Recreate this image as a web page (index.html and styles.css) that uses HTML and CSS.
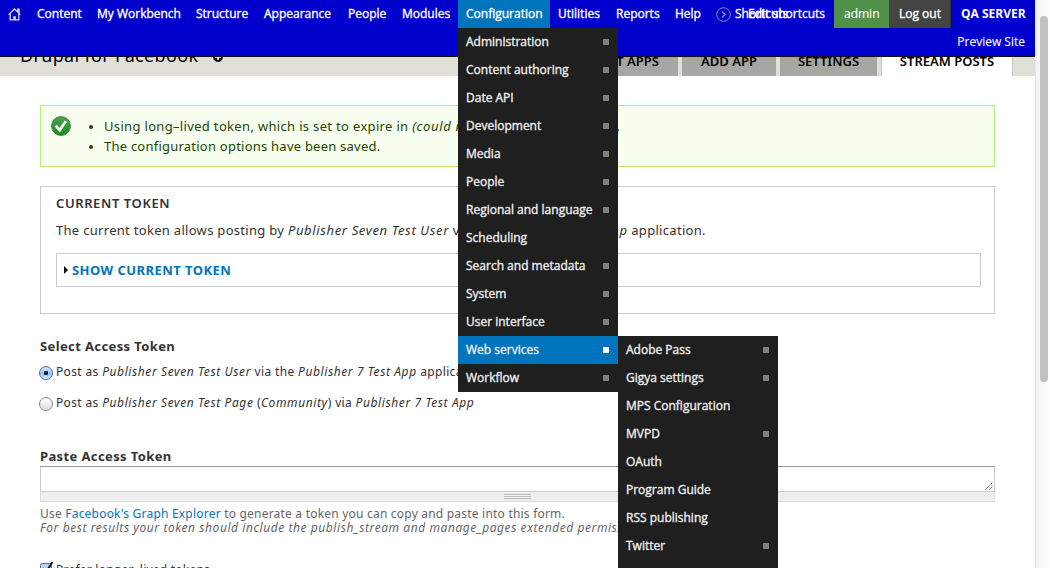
FILE: index.html
```
<!DOCTYPE html>
<html lang="en">
<head>
<meta charset="utf-8">
<title>Drupal for Facebook</title>
<link rel="stylesheet" href="styles.css">
</head>
<body>
<div class="viewport">
<div class="page">
  <nav class="toolbar">
    <ul class="menu">
      <li><svg class="home" width="13" height="13" viewBox="0 0 13 13" fill="none" stroke="#d5d8f2" stroke-width="1.3"><path d="M.6 6.6 6.5 1l5.9 5.6M2.2 5.8v6.1h8.6V5.8M9.8 3.6V1.2h1.2v3.6"/><path d="M5.2 11.8V8.2h2.6v3.6z" fill="#d5d8f2" stroke="none"/></svg></li>
      <li>Content</li>
      <li>My Workbench</li>
      <li>Structure</li>
      <li>Appearance</li>
      <li>People</li>
      <li>Modules</li>
      <li class="open">Configuration</li>
      <li>Utilities</li>
      <li>Reports</li>
      <li>Help</li>
      <li class="short"><svg width="15" height="15" viewBox="0 0 15 15" fill="none" stroke="#8585b5"><circle cx="7.5" cy="7.5" r="6.8"/><path d="M6 4.5l3.2 3L6 10.5" stroke-width="1.4"/></svg><span>Shortcuts</span><span class="edit">Edit shortcuts</span></li>
      <li class="admin">admin</li>
      <li class="logout">Log out</li>
      <li class="server">QA SERVER</li>
    </ul>
    <div class="preview">Preview Site</div>
    <ul class="dropdown main-drop">
      <li class="sub">Administration</li>
      <li class="sub">Content authoring</li>
      <li class="sub">Date API</li>
      <li class="sub">Development</li>
      <li class="sub">Media</li>
      <li class="sub">People</li>
      <li class="sub">Regional and language</li>
      <li>Scheduling</li>
      <li class="sub">Search and metadata</li>
      <li class="sub">System</li>
      <li class="sub">User interface</li>
      <li class="sub active">Web services
        <ul class="dropdown side-drop">
          <li class="sub">Adobe Pass</li>
          <li class="sub">Gigya settings</li>
          <li>MPS Configuration</li>
          <li class="sub">MVPD</li>
          <li>OAuth</li>
          <li>Program Guide</li>
          <li>RSS publishing</li>
          <li class="sub">Twitter</li>
          <li></li>
        </ul>
      </li>
      <li class="sub">Workflow</li>
    </ul>
  </nav>
  <header class="branding">
    <h1>Drupal for Facebook</h1>
    <svg class="plus" width="12" height="12" viewBox="0 0 12 12"><circle cx="6" cy="6" r="5.5" fill="#000" stroke="#fff"/><path d="M6 3v6M3 6h6" stroke="#fff" stroke-width="1.6"/></svg>
    <ul class="tabs">
      <li class="tab-list">LIST APPS</li>
      <li class="tab-add">ADD APP</li>
      <li class="tab-set">SETTINGS</li>
      <li class="tab-stream">STREAM POSTS</li>
    </ul>
  </header>
  <main class="content">
    <section class="status">
      <svg width="20" height="20" viewBox="0 0 20 20"><defs><linearGradient id="g" x1="0" y1="0" x2="0" y2="1"><stop offset="0" stop-color="#4da350"/><stop offset="1" stop-color="#149016"/></linearGradient></defs><circle cx="10" cy="10" r="9.4" fill="url(#g)" stroke="#39803b" stroke-width="1"/><path d="M4.8 9.600l3.800 4.600 6.200-9" fill="none" stroke="#fff" stroke-width="2.8"/></svg>
      <ul>
        <li class="expiry">Using long–lived token, which is set to expire in <em>(could not be determined)</em>.</li>
        <li>The configuration options have been saved.</li>
      </ul>
    </section>
    <section class="fieldset">
      <h2>CURRENT TOKEN</h2>
      <p>The current token allows posting by <em>Publisher Seven Test User</em> via the <em>Publisher 7 Test App</em> application.</p>
      <div class="collapsed"><svg width="4" height="8" viewBox="0 0 4 8"><path d="M0 0l4 4-4 4z"/></svg><span>SHOW CURRENT TOKEN</span></div>
    </section>
    <h3 class="select-label">Select Access Token</h3>
    <div class="radio"><i class="button on"></i><span>Post as <em>Publisher Seven Test User</em> via the <em>Publisher 7 Test App</em> application</span></div>
    <div class="radio"><i class="button"></i><span>Post as <em>Publisher Seven Test Page</em> (<em>Community</em>) via <em>Publisher 7 Test App</em></span></div>
    <h3 class="paste-label">Paste Access Token</h3>
    <div class="textarea"><svg width="8" height="8" viewBox="0 0 8 8" stroke="#555" stroke-dasharray="1.4 .5"><path d="M.5 7.500l7-7M4.500 7.500l3-3"/></svg></div>
    <div class="grippie"><i></i></div>
    <div class="help">
      <p>Use <a>Facebook's Graph Explorer</a> to generate a token you can copy and paste into this form.</p>
      <p><em>For best results your token should include the publish_stream and manage_pages extended permissions.</em></p>
    </div>
    <div class="check"><svg width="14" height="14" viewBox="0 0 14 14"><rect x=".5" y="1.5" width="11" height="11" rx="2" fill="#bcd7f5" stroke="#55699b"/><path d="M3 6l3 4 6.500-10" fill="none" stroke="#111a35" stroke-width="2"/></svg><span>Prefer longer–lived tokens</span></div>
  </main>
</div>
<div class="scrollbar"><i></i></div>
</div>
</body>
</html>
```
FILE: styles.css
```
* { box-sizing: border-box; }
body { margin: 0; color: #333; background: #fff; font: 13px/20px "Noto Sans", sans-serif; }
ul, h1, h2, h3, p { margin: 0; padding: 0; }
ul { list-style: none; }
.viewport { display: flex; width: 1050px; height: 568px; overflow: hidden; }
.page { position: relative; width: 1035px; height: 568px; overflow: hidden; }

/* Fixed admin toolbar */
.toolbar { position: absolute; z-index: 5; top: 0; left: 0; width: 1035px; height: 57px; background: #0000cd; border-bottom: 1px solid #111; color: #fff; font: 500 12px/28px "Open Sans", sans-serif; white-space: nowrap; -webkit-text-stroke: .35px currentColor; }
.menu { display: grid; grid-template-columns: 29px 60px 99px 68px 84px 54px 64px 92px 58px 59px 41px 126px 55px 62px 84px; height: 28px; }
.menu li { padding-left: 8px; }
.home { display: block; margin-top: 8px; }
.open { background: #0074bd; }
.menu .short { position: relative; display: flex; align-items: center; gap: 4px; }
.edit { position: absolute; left: 40px; }
.menu .admin { background: #4f9147; padding-left: 10px; -webkit-text-stroke-width: .1px; }
.menu .logout { background: #444; padding-left: 10px; border-right: 1px solid #333; }
.menu .server { padding-left: 10px; font-weight: 700; -webkit-text-stroke-width: 0; }
.preview { padding-right: 10px; text-align: right; -webkit-text-stroke-width: .1px; }
.dropdown { position: absolute; width: 160px; background: #1f1f1f; }
.dropdown li { position: relative; height: 28px; padding-left: 8px; color: #eee; }
.dropdown .sub::after { content: ""; position: absolute; right: 9px; top: 11px; width: 6px; height: 6px; background: #808080; }
.main-drop { top: 28px; left: 458px; }
.side-drop { top: 0; left: 160px; }
.dropdown .active { background: #0074bd; }
.dropdown .active::after { background: #fff; }

/* Page title and tabs */
.branding { display: flex; height: 76px; padding-left: 20px; background: #e0e0d8; color: #000; }
.branding h1 { width: 192px; padding-top: 42px; font-size: 18px; line-height: 26px; font-weight: 400; letter-spacing: .33px; white-space: nowrap; }
.plus { margin-top: 51px; }
.tabs { display: flex; gap: 4px; margin-left: auto; padding-right: 22px; font: 600 13px/20px "Noto Sans", sans-serif; white-space: nowrap; }
.tabs li { height: 76px; padding-top: 51px; text-align: center; background: #a6a7a2; }
.tab-list { width: 100px; }
.tab-add { width: 94px; }
.tab-set { width: 97px; }
.tabs .tab-stream { width: 132px; background: #fff; border: solid #c5c5bd; border-width: 0 1px; }

/* Form content */
.content { padding: 29px 40px 0; white-space: nowrap; }
.content em { letter-spacing: .64px; }
.status { display: flex; height: 62px; padding: 10px; border: 1px solid #be7; background: #f8fff0; color: #234600; overflow: hidden; letter-spacing: .23px; }
.status ul { padding-left: 33px; list-style: disc; }
.status li::marker { font-size: 11px; }
.status .expiry { letter-spacing: .33px; }
.expiry em { display: inline-block; width: 204px; }
.fieldset { height: 128px; margin-top: 19px; padding: 6px 14px 0 15px; border: 1px solid #ccc; letter-spacing: .3px; }
.fieldset h2 { font-size: 13px; line-height: 20px; font-weight: 600; letter-spacing: .6px; }
.fieldset p { padding-top: 7px; }
.collapsed { display: flex; align-items: center; gap: 4px; height: 34px; margin-top: 13px; width: 925px; padding-left: 7px; border: 1px solid #ccc; font-weight: 700; color: #0074bd; letter-spacing: .45px; }
h3 { font-size: 13px; line-height: 20px; font-weight: 700; letter-spacing: .38px; }
.select-label { margin-top: 22px; }
.radio { display: flex; height: 31px; padding-top: 7px; font-size: 12px; line-height: 18px; letter-spacing: .35px; }
.radio em { letter-spacing: .6px; }
.button { width: 14px; height: 14px; margin: 3px 3px 0 -1px; border: 1px solid #888; border-radius: 50%; background: linear-gradient(#fff, #ddd); }
.button.on { border-color: #536a9f; background: radial-gradient(circle, #111a35 0 2px, transparent 2.5px), linear-gradient(#cfe4fa, #8fc5f4 60%, #cff3ff); }
.paste-label { margin-top: 28px; }
.textarea { display: flex; justify-content: flex-end; align-items: flex-end; height: 26px; padding: 0 1px 1px 0; border: 1px solid #ccc; border-top-color: #999; }
.grippie { display: flex; justify-content: center; height: 10px; padding-top: 2px; border: 1px solid #ddd; border-top: 0; background: #eee; }
.grippie i { width: 27px; height: 5px; background: repeating-linear-gradient(#bbb 0 1px, #f6f6f6 1px 2px); }
.help { padding-top: 5px; color: #666; font-size: 12px; line-height: 14px; letter-spacing: .21px; }
.help em { letter-spacing: .57px; }
.help a { color: #0074bd; }
.check { display: flex; gap: 3px; padding-top: 26px; font-size: 12px; line-height: 18px; letter-spacing: .23px; }
.check svg { margin-top: 1px; margin-right: -1px; }

.scrollbar { width: 15px; height: 568px; padding: 16px 3px 0 4px; border-left: 1px solid #e8e8e8; background: linear-gradient(90deg, #f3f3f3, #fdfdfd); }
.scrollbar i { display: block; width: 8px; height: 366px; border-radius: 4px; background: #c1c1c1; }
```
